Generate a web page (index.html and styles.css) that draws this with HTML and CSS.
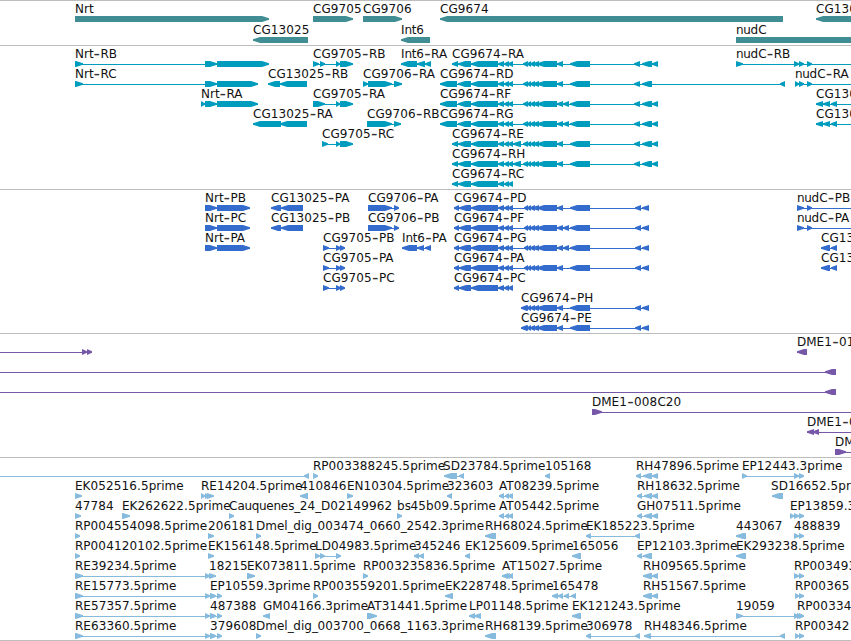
FILE: index.html
```html
<!DOCTYPE html>
<html lang="en">
<head>
    <meta charset="utf-8">
    <title>Genome region</title>
    <link rel="stylesheet" href="styles.css">
</head>
<body>
    <div class="browser">
        <svg class="track genes" id="genes"></svg>
        <svg class="track transcripts" id="transcripts"></svg>
        <svg class="track proteins" id="proteins"></svg>
        <svg class="track clones" id="clones"></svg>
        <svg class="track ests" id="ests"></svg>
    </div>
    <script src="tracks.js"></script>
</body>
</html>
```
FILE: styles.css
```css
body {
    margin: 0;
    background-color: white;
    overflow: hidden;
}

.browser {
    display: flex;
    flex-direction: column;
    width: 851px;
    height: 640px;
    border-bottom: 1px solid #bdbdbd;
}

.track {
    display: block;
    box-sizing: border-box;
    width: 100%;
    flex: none;
    overflow: hidden;
    border-top: 1px solid #bdbdbd;
}

.genes { height: 45px; fill: #408e93; }
.transcripts { height: 144px; fill: #009cbe; }
.proteins { height: 144px; fill: #336ccc; }
.clones { height: 124px; fill: #7657a8; }
.ests { height: 183px; fill: #87bbde; }

.label {
    font-family: "DejaVu Sans", sans-serif;
    font-size: 12px;
    fill: #111;
}

.dash {
    font-size: 18px;
    fill: #333;
}
```
FILE: tracks.js
```js
const SVG = "http://www.w3.org/2000/svg";

// exons shared by the CG9674 models
const LEFT = "471-498 498-504 504-509 508-513";
const MID = "523-528 527-531 530-535 533-539 537-557 557-563";
const PMID = "524-528 527-531 530-535 533-539 537-557 557-563";
const RIGHT = "570-590 634-640 642-652";
const PRIGHT = "570-590 635-641 642-649";

// [row, label, strand, exons, label x if it is not the start]
const tracks = {
    genes: [
        [0, "Nrt", "+", "75-269"],
        [1, "CG13025", "-", "253-308"],
        [0, "CG9705", "+", "313-353"],
        [0, "CG9706", "+", "363-402"],
        [1, "Int6", "-", "401-430"],
        [0, "CG9674", "-", "440-783"],
        [1, "nudC", "+", "736-900"],
        [0, "CG130", "-", "816-900"]
    ],
    transcripts: [
        [0, "Nrt-RB", "+", "75-83 205-217 217-269"],
        [0, "CG9705-RB", "+", "313-319 320-325 336-340 340-353"],
        [0, "Int6-RA", "-", "401-417 417-425 425-431"],
        [0, "CG9674-RA", "-", `452-458 458-471 ${LEFT} ${MID} ${RIGHT} 652-658`],
        [0, "nudC-RB", "+", "736-743 794-799 799-804 807-812 900-905"],
        [1, "Nrt-RC", "+", "75-83 205-217 217-258"],
        [1, "CG13025-RB", "-", "268-280 280-307"],
        [1, "CG9706-RA", "+", "363-368 368-392 394-402"],
        [1, "CG9674-RD", "-", `440-457 458-471 ${LEFT} ${MID} ${RIGHT} 780-785`],
        [1, "nudC-RA", "+", "795-799 799-804 807-812 900-905"],
        [2, "Nrt-RA", "+", "201-205 205-217 217-258"],
        [2, "CG9705-RA", "+", "313-325 336-340 340-353"],
        [2, "CG9674-RF", "-", `440-457 458-471 ${LEFT} ${MID} 563-569 ${RIGHT} 652-658`],
        [2, "CG130", "-", "816-823 823-830 831-837 900-905"],
        [3, "CG13025-RA", "-", "253-281 280-307"],
        [3, "CG9706-RB", "+", "367-392 394-401"],
        [3, "CG9674-RG", "-", `440-457 458-471 ${LEFT} ${MID} 563-569 ${RIGHT} 652-658`],
        [3, "CG130", "-", "816-823 823-830 831-837 900-905"],
        [4, "CG9705-RC", "+", "322-328 336-340 340-353"],
        [4, "CG9674-RE", "-", `452-458 458-471 ${LEFT} 513-521 ${MID} ${RIGHT} 652-658`],
        [5, "CG9674-RH", "-", `452-458 458-471 ${LEFT} 513-521 ${MID} ${RIGHT} 652-658`],
        [6, "CG9674-RC", "-", `452-458 458-471 ${LEFT}`]
    ],
    proteins: [
        [0, "Nrt-PB", "+", "205-217 217-250"],
        [1, "Nrt-PC", "+", "205-217 217-250"],
        [2, "Nrt-PA", "+", "205-217 217-250"],
        [0, "CG13025-PA", "-", "271-281 281-303"],
        [1, "CG13025-PB", "-", "271-281 281-303"],
        [0, "CG9706-PA", "+", "368-392 394-399"],
        [1, "CG9706-PB", "+", "368-392 394-399"],
        [2, "CG9705-PB", "+", "323-329 336-341 340-345"],
        [3, "CG9705-PA", "+", "323-329 336-341 340-345"],
        [4, "CG9705-PC", "+", "323-329 336-341 340-345"],
        [2, "Int6-PA", "-", "402-417 417-424 425-431"],
        [0, "CG9674-PD", "-", `454-459 459-471 ${LEFT} ${PMID} ${PRIGHT}`],
        [1, "CG9674-PF", "-", `454-459 459-471 ${LEFT} ${PMID} 563-569 ${PRIGHT}`],
        [2, "CG9674-PG", "-", `454-459 459-471 ${LEFT} ${PMID} 563-569 ${PRIGHT}`],
        [3, "CG9674-PA", "-", `454-459 459-471 ${LEFT} ${PMID} ${PRIGHT}`],
        [4, "CG9674-PC", "-", `454-459 459-471 ${LEFT}`],
        [5, "CG9674-PH", "-", `521-527 ${PMID} ${PRIGHT}`],
        [6, "CG9674-PE", "-", `521-527 ${PMID} ${PRIGHT}`],
        [0, "nudC-PB", "+", "797-804 807-812 900-905"],
        [1, "nudC-PA", "+", "797-804 807-812 900-905"],
        [2, "CG130", "-", "821-830 831-837"],
        [3, "CG130", "-", "821-830 831-837"]
    ],
    clones: [
        [0, "", "+", "-20--10 82-87 87-92"],
        [0, "DME1-01", "-", "797-807"],
        [1, "", "-", "-20--10 825-836"],
        [2, "", "-", "-20--10 825-836"],
        [3, "DME1-008C20", "+", "592-602 900-905"],
        [4, "DME1-0", "-", "807-814 813-819 900-905"],
        [5, "DME", "+", "835-846 900-905"]
    ],
    ests: [
        [0, "", "-", "-20--10 304-309"],
        [0, "RP003388245.5prime", "+", "313-318"],
        [0, "SD23784.5prime", "-", "444-457 459-464", 443],
        [0, "105168", "-", "545-550"],
        [0, "RH47896.5prime", "-", "636-641 643-652 652-658"],
        [0, "EP12443.3prime", "+", "742-747 794-799 799-804"],
        [1, "EK052516.5prime", "+", "75-82"],
        [1, "RE14204.5prime", "+", "201-205 205-210 207-214"],
        [1, "410846", "-", "300-308"],
        [1, "EN10304.5prime", "+", "347-353"],
        [1, "323603", "-", "447-452"],
        [1, "AT08239.5prime", "-", "499-504 505-509 508-513"],
        [1, "RH18632.5prime", "-", "637-642 644-652 652-658"],
        [1, "SD16652.5prime", "-", "772-783", 771],
        [2, "47784", "+", "75-81"],
        [2, "EK262622.5prime", "+", "122-130"],
        [2, "Cauquenes_24_D02149962", "+", "229-234"],
        [2, "bs45b09.5prime", "+", "397-402"],
        [2, "AT05442.5prime", "-", "499-504 505-509 508-513"],
        [2, "GH07511.5prime", "-", "637-642 644-652 652-658"],
        [2, "EP13859.3prime", "+", "790-794 794-799 799-804"],
        [3, "RP004554098.5prime", "+", "75-80"],
        [3, "206181", "+", "208-214"],
        [3, "Dmel_dig_003474_0660_2542.3prime", "+", "256-261"],
        [3, "RH68024.5prime", "-", "485-496"],
        [3, "EK185223.5prime", "-", "586-591 635-640"],
        [3, "443067", "-", "736-746"],
        [3, "488839", "+", "794-799 799-804"],
        [4, "RP004120102.5prime", "+", "75-80"],
        [4, "EK156148.5prime", "+", "208-214"],
        [4, "LD04983.5prime", "+", "315-320 320-325 336-341"],
        [4, "345246", "-", "414-419 419-424"],
        [4, "EK125609.5prime", "-", "465-470"],
        [4, "165056", "-", "572-581"],
        [4, "EP12103.3prime", "-", "637-642 643-652"],
        [4, "EK293238.5prime", "-", "736-746"],
        [5, "RE39234.5prime", "+", "75-83 205-210"],
        [5, "18215", "+", "209-216"],
        [5, "EK073811.5prime", "+", "247-255"],
        [5, "RP003235836.5prime", "+", "363-368"],
        [5, "AT15027.5prime", "-", "502-508 505-510 508-513"],
        [5, "RH09565.5prime", "-", "643-652 652-658"],
        [5, "RP003493", "+", "794-799 799-804"],
        [6, "RE15773.5prime", "+", "75-83 205-210 210-216 217-222"],
        [6, "EP10559.3prime", "+", "210-216"],
        [6, "RP003559201.5prime", "+", "313-318"],
        [6, "EK228748.5prime", "-", "445-453"],
        [6, "165478", "-", "552-558 558-563 564-569 571-576"],
        [6, "RH51567.5prime", "-", "643-652 652-658"],
        [6, "RP00365", "+", "795-799 799-804"],
        [7, "RE57357.5prime", "+", "75-83 205-210 210-216 217-222"],
        [7, "487388", "+", "210-216"],
        [7, "GM04166.3prime", "-", "263-270"],
        [7, "AT31441.5prime", "+", "367-377"],
        [7, "LP01148.5prime", "-", "469-475 474-481"],
        [7, "EK121243.5prime", "-", "572-581"],
        [7, "19059", "+", "736-743 794-799 797-801"],
        [7, "RP00334", "+", "797-801 799-804"],
        [8, "RE63360.5prime", "+", "75-83 205-210 210-216 217-222"],
        [8, "379608", "+", "210-216"],
        [8, "Dmel_dig_003700_0668_1163.3prime", "+", "256-261"],
        [8, "RH68139.5prime", "-", "485-496"],
        [8, "306978", "-", "586-591 635-640"],
        [8, "RH48346.5prime", "-", "644-651 780-785"],
        [8, "RP00342", "+", "795-799 799-804"]
    ]
};

function add(parent, name, attrs) {
    const el = document.createElementNS(SVG, name);
    for (const key in attrs) el.setAttribute(key, attrs[key]);
    parent.appendChild(el);
    return el;
}

function drawExon(svg, x1, x2, top, strand) {
    const head = Math.min(x2 - x1, 7);
    const mid = top + 3;
    const bottom = top + 6;
    // blunt tip
    const t1 = mid - 0.8;
    const t2 = mid + 0.8;
    let points;
    if (strand === "+") {
        points = `${x1},${top} ${x2 - head},${top} ${x2},${t1} ${x2},${t2} ${x2 - head},${bottom} ${x1},${bottom}`;
    } else {
        points = `${x2},${top} ${x1 + head},${top} ${x1},${t1} ${x1},${t2} ${x1 + head},${bottom} ${x2},${bottom}`;
    }
    add(svg, "polygon", { points });
}

// extra advance after a character
function extra(c) {
    if (c === "-") return 0.3;
    if (c === "_") return -0.4;
    if (/\d/.test(c)) return 0.13;
    if (/[aqnust]/.test(c)) return -0.35;
    return 0;
}

function drawLabel(svg, label, x, y) {
    const chars = [...label];
    const dx = chars.map((c, i) => ((i ? extra(chars[i - 1]) : 0) + (c === "-" ? 0.3 : 0)).toFixed(2));
    // the wide dash sits at the middle of the capitals
    const dy = chars.map((c, i) => c === "-" ? 0.5 : chars[i - 1] === "-" ? -0.5 : 0);
    const text = add(svg, "text", { class: "label", x, y, dx: dx.join(" "), dy: dy.join(" ") });
    for (const part of label.split(/(-)/)) {
        if (part === "-") {
            add(text, "tspan", { class: "dash" }).textContent = part;
        } else {
            text.append(part);
        }
    }
}

for (const id in tracks) {
    const svg = document.getElementById(id);
    const pitch = id === "genes" ? 21 : 20;
    for (const [row, label, strand, exons, labelX] of tracks[id]) {
        const y = row * pitch;
        const blocks = exons.split(" ").map(e => e.match(/^(-?\d+)-(-?\d+)$/).slice(1).map(Number));
        const start = blocks[0][0];
        const end = blocks[blocks.length - 1][1];
        // intron line under the exons
        add(svg, "rect", { x: start, y: y + 18, width: end - start, height: 1 });
        for (const [x1, x2] of blocks) drawExon(svg, x1, x2, y + 15, strand);
        if (label) drawLabel(svg, label, labelX || start, y + 12);
    }
}
```
